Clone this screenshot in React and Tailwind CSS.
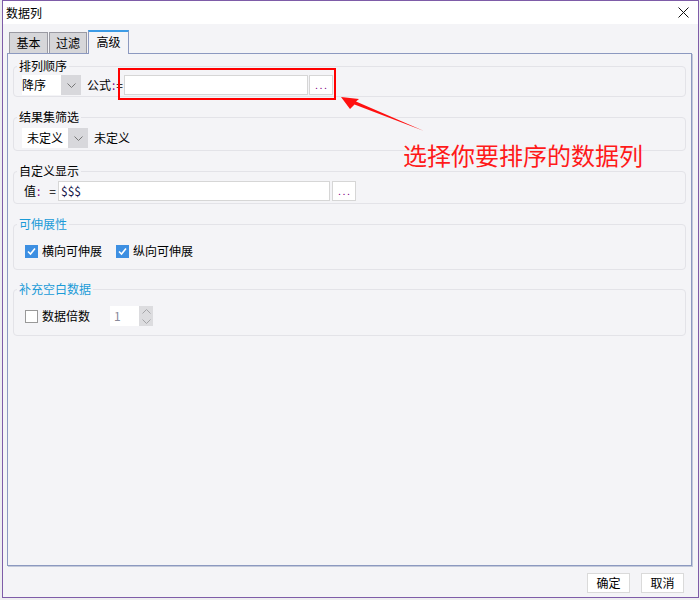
import React from "react";

const FONT = { fontFamily: '"Noto Sans CJK SC", "Noto Sans", sans-serif' };

function Chevron({ up = false, color = "#777" }) {
  return (
    <svg width="9" height="5" viewBox="0 0 9 5">
      <polyline
        points={up ? "0.5,4.5 4.5,0.5 8.5,4.5" : "0.5,0.5 4.5,4.5 8.5,0.5"}
        fill="none"
        stroke={color}
        strokeWidth="1"
      />
    </svg>
  );
}

function Select({ value, width, textPad }) {
  return (
    <div className={`flex h-[20px] ${width}`}>
      <div className={`flex-1 bg-white flex items-center ${textPad} leading-[20px]`}>{value}</div>
      <div className="w-[20px] bg-[#d8d8dc] flex items-center justify-center">
        <Chevron />
      </div>
    </div>
  );
}

function Dots() {
  return (
    <div className="w-[24px] h-[20px] bg-white border border-[#d6d6d6] flex items-end justify-center pb-[4px]">
      <span className="text-[#800080] text-[9px] leading-[9px] tracking-[2px] pl-[2px]">...</span>
    </div>
  );
}

function Checkbox({ checked }) {
  if (checked) {
    return (
      <div className="w-[13px] h-[13px] bg-[#3d8fe2] flex items-center justify-center">
        <svg width="11" height="11" viewBox="0 0 11 11">
          <polyline points="2,5.5 4.5,8 9,2.5" fill="none" stroke="#fff" strokeWidth="1.6" />
        </svg>
      </div>
    );
  }
  return <div className="w-[13px] h-[13px] bg-white border border-[#999]" />;
}

function Group({ legend, blue, mt, pt, pb, children }) {
  return (
    <div
      className={`relative ${mt} ${pt} ${pb} pl-[8px] border border-[#e3e3e8] rounded-[4px]`}
    >
      <span
        className={`absolute left-[3px] top-[-9px] px-[2px] bg-[#f4f4f7] leading-[16px] ${
          blue ? "text-[#1a9bd7]" : "text-black"
        }`}
      >
        {legend}
      </span>
      {children}
    </div>
  );
}

export default function App() {
  return (
    <div className="relative w-[700px] h-[600px] bg-[#eeeef0] overflow-hidden text-[12px] text-black" style={FONT}>
      <div className="ml-[2px] w-[697px] h-[598px] border border-[#7e5ca8] bg-[#f4f4f7] flex flex-col">
        {/* title bar */}
        <div className="h-[23px] bg-white flex items-center justify-between pl-[3px] pr-[9px]">
          <span className="leading-[16px]">数据列</span>
          <svg width="11" height="11" viewBox="0 0 11 11">
            <line x1="0.5" y1="0.5" x2="10.5" y2="10.5" stroke="#111" strokeWidth="1" />
            <line x1="10.5" y1="0.5" x2="0.5" y2="10.5" stroke="#111" strokeWidth="1" />
          </svg>
        </div>

        {/* body */}
        <div className="flex-1 flex flex-col pt-[6px] pl-[4px] pr-[6px]">
          <div className="h-[24px] -mb-[1px] flex items-end pl-[2px] relative z-10">
            <div className="h-[21px] mb-[1px] w-[39px] bg-[#d6d6d9] border border-[#9a9aa2] border-b-0 flex items-center justify-center leading-[16px]">
              基本
            </div>
            <div className="h-[21px] mb-[1px] w-[38px] ml-[1px] bg-[#d6d6d9] border border-[#9a9aa2] border-b-0 flex items-center justify-center leading-[16px]">
              过滤
            </div>
            <div className="h-[24px] w-[41px] ml-[1px] bg-[#f4f4f7] border-l border-r border-[#8c99c0] border-t-2 border-t-[#3c9be6] flex items-center justify-center leading-[16px] pb-[2px]">
              高级
            </div>
          </div>

          <div className="flex-1 border border-[#8c99c0] shadow-[1px_1px_0_#c3c9da] bg-[#f4f4f7] pl-[5px] pr-[5px] pt-[12px]">
            <Group legend="排列顺序" mt="mt-0" pt="pt-[8px]" pb="pb-[1px]">
              <div className="flex items-center h-[20px]">
                <Select value="降序" width="w-[59px]" textPad="pl-[0px]" />
                <span className="ml-[6px]">公式</span>
                <span className="text-[#800080] ml-[1px]">:</span>
                <span className="ml-[1px]">=</span>
                <div className="ml-[1px] w-[184px] h-[20px] bg-white border border-[#d6d6d6]" />
                <div className="ml-[1px]">
                  <Dots />
                </div>
              </div>
            </Group>

            <Group legend="结果集筛选" mt="mt-[20px]" pt="pt-[10px]" pb="pb-[2px]">
              <div className="flex items-center h-[20px]">
                <Select value="未定义" width="w-[66px]" textPad="pl-[5px]" />
                <span className="ml-[6px]">未定义</span>
              </div>
            </Group>

            <Group legend="自定义显示" mt="mt-[20px]" pt="pt-[9px]" pb="pb-[2px]">
              <div className="flex items-center h-[20px]">
                <span className="ml-[2px]">值</span>
                <span className="text-[#800080] ml-[1px]">:</span>
                <span className="ml-[9px]">=</span>
                <div className="ml-[2px] w-[272px] h-[20px] bg-white border border-[#d6d6d6] flex items-center pl-[2px] text-[#16164a]">
                  $$$
                </div>
                <div className="ml-[2px]">
                  <Dots />
                </div>
              </div>
            </Group>

            <Group legend="可伸展性" blue mt="mt-[20px]" pt="pt-[18px]" pb="pb-[10px]">
              <div className="flex items-center h-[16px] pl-[3px]">
                <Checkbox checked />
                <span className="ml-[4px]">横向可伸展</span>
                <div className="ml-[14px]">
                  <Checkbox checked />
                </div>
                <span className="ml-[4px]">纵向可伸展</span>
              </div>
            </Group>

            <Group legend="补充空白数据" blue mt="mt-[19px]" pt="pt-[16px]" pb="pb-[9px]">
              <div className="flex items-center h-[20px] pl-[3px]">
                <Checkbox />
                <span className="ml-[4px]">数据倍数</span>
                <div className="ml-[20px] flex h-[20px]">
                  <div className="w-[29px] bg-white flex items-center pl-[4px] text-[#8a8a9a]">1</div>
                  <div className="w-[14px] bg-[#dcdcdf] flex flex-col items-center justify-center gap-[5px]">
                    <Chevron up color="#a5a5a8" />
                    <Chevron color="#a5a5a8" />
                  </div>
                </div>
              </div>
            </Group>
          </div>
        </div>

        {/* footer */}
        <div className="h-[31px] flex justify-end items-start pt-[7px] pr-[14px] gap-[11px]">
          <button className="w-[43px] h-[20px] bg-white border border-[#dadada] leading-[18px]">确定</button>
          <button className="w-[43px] h-[20px] bg-white border border-[#dadada] leading-[18px]">取消</button>
        </div>
      </div>

      {/* annotation overlay */}
      <div className="absolute left-[118px] top-[68px] w-[218px] h-[32px] border-2 border-[#ff0000] pointer-events-none" />
      <svg className="absolute left-0 top-0 pointer-events-none" width="700" height="600" viewBox="0 0 700 600">
        <polygon
          points="341,97 359,99 356,101.5 424,131 354.5,104.5 350,109"
          fill="#ff1010"
        />
      </svg>
      <div className="absolute left-[403px] top-[143px] text-[24px] leading-[24px] text-[#ff1a1a]">
        选择你要排序的数据列
      </div>
    </div>
  );
}
